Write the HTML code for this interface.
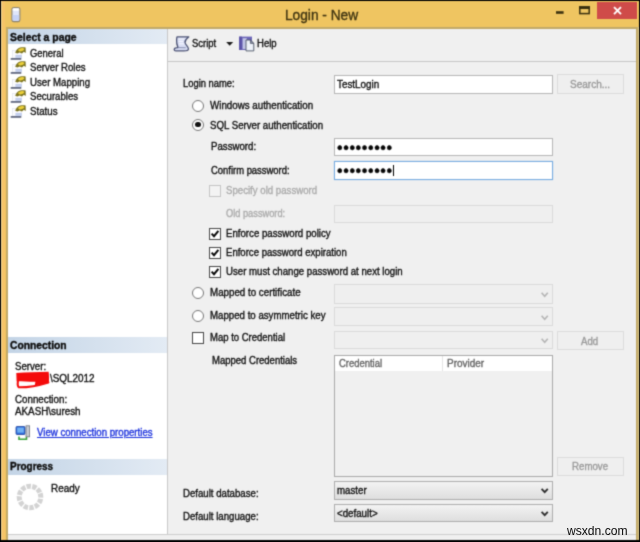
<!DOCTYPE html>
<html>
<head>
<meta charset="utf-8">
<title>Login - New</title>
<style>
html,body{margin:0;padding:0;}
body{width:640px;height:542px;overflow:hidden;background:#000;position:relative;font-family:"Liberation Sans",sans-serif;font-size:10px;color:#121212;}
.abs{position:absolute;}
#win{left:1px;top:1px;width:638px;height:539px;background:#efc561;}
#tan{left:6.3px;top:27.3px;width:631.5px;height:512.7px;background:#c1a968;}
#close{left:596.5px;top:1.5px;width:40.5px;height:17px;background:#cf4b49;}
#content{left:8px;top:28.7px;width:627.6px;height:511.3px;background:#f0f0f0;}
#left{left:8px;top:28.7px;width:159px;height:505px;background:#fff;}
.hdr{left:8px;width:159px;height:16px;background:linear-gradient(90deg,#c3d4e6,#e3ebf4);}
.t{position:absolute;white-space:nowrap;line-height:13px;transform-origin:0 0;-webkit-text-stroke:0.35px;}
.inp{position:absolute;background:#fff;border:1px solid #b6b6b6;box-sizing:border-box;}
.dis{position:absolute;background:#efefef;border:1px solid #dadada;box-sizing:border-box;}
.btn{position:absolute;background:#efefef;border:1px solid #dcdcdc;box-sizing:border-box;}
.cmb{position:absolute;background:linear-gradient(#f3f3f3,#dedede);border:1px solid #adadad;box-sizing:border-box;}
.radio{position:absolute;width:12px;height:12px;border:1.1px solid #777;border-radius:50%;background:#fff;box-sizing:border-box;}
.chk{position:absolute;width:12px;height:12px;border:1.1px solid #474747;background:#fff;box-sizing:border-box;}
.chk.d{border-color:#c4c4c4;background:#f3f3f3;}
svg{position:absolute;overflow:visible;}
</style>
</head>
<body>
<svg width="0" height="0" style="position:absolute"><defs><filter id="soft" x="0" y="0" width="100%" height="100%" color-interpolation-filters="sRGB"><feConvolveMatrix order="3" kernelMatrix="0.062 0.249 0.062 0.249 1 0.249 0.062 0.249 0.062" divisor="2.244" edgeMode="duplicate" preserveAlpha="true"/></filter></defs></svg>
<div id="root" class="abs" style="left:0;top:0;width:640px;height:542px;background:#000;filter:url(#soft)">
<div id="win" class="abs"></div>
<div class="abs" style="left:1px;top:1px;width:1px;height:539px;background:#f2d592"></div>
<div class="abs" style="left:2px;top:1px;width:2.5px;height:539px;background:#f6c468"></div>
<div id="tan" class="abs"></div>
<div class="abs" style="left:637.8px;top:27px;width:1.2px;height:513px;background:#ead695"></div>
<div id="close" class="abs"></div>
<svg style="left:540px;top:0" width="100" height="28" viewBox="0 0 100 28">
  <rect x="16" y="11.2" width="7.6" height="2.6" fill="#3a300f"/>
  <rect x="39.8" y="7" width="9.4" height="6.6" fill="none" stroke="#3a300f" stroke-width="1.5"/>
  <rect x="39" y="6.2" width="11" height="2.8" fill="#3a300f"/>
  <path d="M74 7.2 L81 14.2 M81 7.2 L74 14.2" stroke="#fff" stroke-width="1.9" fill="none"/>
</svg>
<!-- title icon -->
<svg style="left:10px;top:5.7px" width="12" height="17" viewBox="0 0 12 17">
  <rect x="1.9" y="1.6" width="8" height="14" rx="2" fill="#dfe6fb" stroke="#8b826c" stroke-width="1.1"/>
  <rect x="2.6" y="2.2" width="6.6" height="2.6" rx="1" fill="#fff"/>
  <rect x="2.6" y="9" width="6.6" height="5.6" fill="#c6d3f7"/>
</svg>

<div id="content" class="abs"></div>
<div id="left" class="abs"></div>
<div class="abs" style="left:167px;top:29px;width:1px;height:505px;background:#c8c8c8"></div>
<div class="abs" style="left:8px;top:533.6px;width:627.6px;height:1.2px;background:#cdcdcd"></div>

<div class="abs hdr" style="top:28.7px;height:15.8px"></div>
<div class="abs hdr" style="top:337px;height:15.7px"></div>
<div class="abs hdr" style="top:459px"></div>

<!-- page icons -->
<svg style="left:11px;top:46.5px" width="16" height="13" viewBox="0 0 16 13">
  <rect x="1.4" y="3.6" width="8.8" height="7.6" fill="#fbfbfd" stroke="#e3e6ee" stroke-width="0.7"/>
  <rect x="4.4" y="7.9" width="6.5" height="3" fill="#c3cfee"/>
  <rect x="-0.3" y="11.3" width="10.6" height="1.3" fill="#2c3555"/>
  <path d="M4.2 5.8 C5 3.4 6.6 1.4 9 0.6 C11 0 13.2 0.1 14.6 0.4 L14.8 6 L12.8 4.8 L11 6.6 L8.6 5.5 L6.4 6.6 Z" fill="#7d7521"/>
  <ellipse cx="10.2" cy="2.7" rx="3.1" ry="1.6" fill="#ebcf3a" transform="rotate(-12 10.2 2.7)"/>
</svg>
<svg style="left:11px;top:61px" width="16" height="13" viewBox="0 0 16 13">
  <rect x="1.4" y="3.6" width="8.8" height="7.6" fill="#fbfbfd" stroke="#e3e6ee" stroke-width="0.7"/>
  <rect x="4.4" y="7.9" width="6.5" height="3" fill="#c3cfee"/>
  <rect x="-0.3" y="11.3" width="10.6" height="1.3" fill="#2c3555"/>
  <path d="M4.2 5.8 C5 3.4 6.6 1.4 9 0.6 C11 0 13.2 0.1 14.6 0.4 L14.8 6 L12.8 4.8 L11 6.6 L8.6 5.5 L6.4 6.6 Z" fill="#7d7521"/>
  <ellipse cx="10.2" cy="2.7" rx="3.1" ry="1.6" fill="#ebcf3a" transform="rotate(-12 10.2 2.7)"/>
</svg>
<svg style="left:11px;top:75.5px" width="16" height="13" viewBox="0 0 16 13">
  <rect x="1.4" y="3.6" width="8.8" height="7.6" fill="#fbfbfd" stroke="#e3e6ee" stroke-width="0.7"/>
  <rect x="4.4" y="7.9" width="6.5" height="3" fill="#c3cfee"/>
  <rect x="-0.3" y="11.3" width="10.6" height="1.3" fill="#2c3555"/>
  <path d="M4.2 5.8 C5 3.4 6.6 1.4 9 0.6 C11 0 13.2 0.1 14.6 0.4 L14.8 6 L12.8 4.8 L11 6.6 L8.6 5.5 L6.4 6.6 Z" fill="#7d7521"/>
  <ellipse cx="10.2" cy="2.7" rx="3.1" ry="1.6" fill="#ebcf3a" transform="rotate(-12 10.2 2.7)"/>
</svg>
<svg style="left:11px;top:90px" width="16" height="13" viewBox="0 0 16 13">
  <rect x="1.4" y="3.6" width="8.8" height="7.6" fill="#fbfbfd" stroke="#e3e6ee" stroke-width="0.7"/>
  <rect x="4.4" y="7.9" width="6.5" height="3" fill="#c3cfee"/>
  <rect x="-0.3" y="11.3" width="10.6" height="1.3" fill="#2c3555"/>
  <path d="M4.2 5.8 C5 3.4 6.6 1.4 9 0.6 C11 0 13.2 0.1 14.6 0.4 L14.8 6 L12.8 4.8 L11 6.6 L8.6 5.5 L6.4 6.6 Z" fill="#7d7521"/>
  <ellipse cx="10.2" cy="2.7" rx="3.1" ry="1.6" fill="#ebcf3a" transform="rotate(-12 10.2 2.7)"/>
</svg>
<svg style="left:11px;top:104.5px" width="16" height="13" viewBox="0 0 16 13">
  <rect x="1.4" y="3.6" width="8.8" height="7.6" fill="#fbfbfd" stroke="#e3e6ee" stroke-width="0.7"/>
  <rect x="4.4" y="7.9" width="6.5" height="3" fill="#c3cfee"/>
  <rect x="-0.3" y="11.3" width="10.6" height="1.3" fill="#2c3555"/>
  <path d="M4.2 5.8 C5 3.4 6.6 1.4 9 0.6 C11 0 13.2 0.1 14.6 0.4 L14.8 6 L12.8 4.8 L11 6.6 L8.6 5.5 L6.4 6.6 Z" fill="#7d7521"/>
  <ellipse cx="10.2" cy="2.7" rx="3.1" ry="1.6" fill="#ebcf3a" transform="rotate(-12 10.2 2.7)"/>
</svg>

<!-- red scribble -->
<svg style="left:14px;top:371px" width="40" height="20" viewBox="0 0 40 20">
  <path d="M2.3 1.9 C12 1.3 24 1 34.6 0.8 C35.1 4 35.2 8 34.9 11.6 C30 13 25 13.8 20.8 14.2 L21.4 10.8 C14 10.6 8 10.5 2.6 10.2 Z" fill="#f40b0b"/>
  <path d="M3.9 10.4 C3.5 13.2 3.7 15.4 4.8 16.3 C12 16.4 24 14.6 34.4 11.4" stroke="#f40b0b" stroke-width="2.1" fill="none" stroke-linecap="round"/>
</svg>

<!-- connection icon -->
<svg style="left:15px;top:425px" width="16" height="16" viewBox="0 0 16 16">
  <rect x="1" y="1.5" width="9" height="8" rx="1" fill="#2f6fdc" stroke="#1c3f9a" stroke-width="0.8"/>
  <rect x="2.2" y="2.6" width="6.6" height="5" fill="#6fb0f4"/>
  <rect x="11" y="0.8" width="3.6" height="11" fill="#c9ccd2" stroke="#70747c" stroke-width="0.8"/>
  <path d="M4 11.5 L4 14.2 L11.5 14.2 L11.5 12" fill="none" stroke="#3aa23a" stroke-width="1.6"/>
</svg>

<!-- spinner -->
<svg style="left:15px;top:482px" width="30" height="30" viewBox="0 0 30 30">
  <circle cx="15" cy="15" r="10.8" fill="none" stroke="#d3d3d3" stroke-width="5" stroke-dasharray="4.3 1.355" transform="rotate(-20 15 15)"/>
</svg>

<!-- toolbar -->
<div class="abs" style="left:168px;top:61px;width:468px;height:1px;background:#c6c6c6"></div>
<svg style="left:174px;top:36px" width="17" height="16" viewBox="0 0 17 16">
  <path d="M3 0.9 L14.8 0.9 C13 2.6 10.6 4 11 6.5 C11.4 9 14.5 10.5 14.5 13 C14.4 14.6 12.4 14.9 10 14.9 L2 14.9 C0.6 14.9 0 14 0.3 13 C0.6 11.8 2.5 11.6 4 11.6 C3 9 2.4 6 2.6 4 C2.7 2.6 2.8 1.6 3 0.9 Z" fill="#d9def4" stroke="#4c5374" stroke-width="1.3" stroke-linejoin="round"/>
  <path d="M4.4 3 L10.4 3 M4.6 5.4 L9.4 5.4 M5 7.8 L10 7.8" stroke="#f6f8ff" stroke-width="1" fill="none"/>
  <path d="M4 11.6 L11.8 11.8" stroke="#7c84a8" stroke-width="0.9" fill="none"/>
</svg>
<svg style="left:225.5px;top:42.3px" width="8" height="5" viewBox="0 0 8 5"><path d="M0.2 0 L7.2 0 L3.7 3.8 Z" fill="#1a1a1a"/></svg>
<svg style="left:239px;top:36px" width="16" height="16" viewBox="0 0 16 16">
  <rect x="0.2" y="0.6" width="12.8" height="13.4" fill="#6c66b8"/>
  <rect x="0.2" y="0.6" width="2.6" height="13.4" fill="#5a52a6"/>
  <rect x="3.6" y="2.2" width="4.2" height="10.8" fill="#c2c5e7"/>
  <path d="M7 4 L11.4 4 L14.8 7.4 L14.8 14.9 L7 14.9 Z" fill="#eef2f9" stroke="#4a5263" stroke-width="0.9" stroke-linejoin="round"/>
  <path d="M11.4 4 L11.4 7.4 L14.8 7.4 Z" fill="#8b93a8" stroke="#4a5263" stroke-width="0.7"/>
</svg>

<!-- form -->
<div class="inp" style="left:333.5px;top:75px;width:219.5px;height:19px"></div>
<div class="btn" style="left:557px;top:74px;width:66.5px;height:19.5px"></div>

<div class="radio" style="left:192px;top:99.7px"></div>
<div class="radio" style="left:192px;top:118.5px"></div>
<div class="abs" style="left:195.3px;top:121.8px;width:5.4px;height:5.4px;border-radius:50%;background:#111"></div>

<div class="inp" style="left:333.5px;top:137.5px;width:219.5px;height:18.5px"></div>
<div class="inp" style="left:333.5px;top:160.5px;width:219.5px;height:19px;border-color:#78ace0;box-shadow:0 0 1px #a5c8ea"></div>
<div class="abs" style="left:393.3px;top:164.5px;width:1.2px;height:11.5px;background:#000"></div>

<div class="chk d" style="left:209px;top:185px"></div>
<div class="dis" style="left:333.5px;top:204.5px;width:219.5px;height:18.5px"></div>

<div class="chk" style="left:209px;top:227.5px"></div>
<div class="chk" style="left:209px;top:246.5px"></div>
<div class="chk" style="left:209px;top:266px"></div>
<svg style="left:209px;top:227.5px" width="12" height="12" viewBox="0 0 12 12"><path d="M2.6 5.6 L5 8.2 L9.4 2.8" fill="none" stroke="#0a0a0a" stroke-width="2"/></svg>
<svg style="left:209px;top:246.5px" width="12" height="12" viewBox="0 0 12 12"><path d="M2.6 5.6 L5 8.2 L9.4 2.8" fill="none" stroke="#0a0a0a" stroke-width="2"/></svg>
<svg style="left:209px;top:266px" width="12" height="12" viewBox="0 0 12 12"><path d="M2.6 5.6 L5 8.2 L9.4 2.8" fill="none" stroke="#0a0a0a" stroke-width="2"/></svg>

<div class="radio" style="left:192px;top:286.5px"></div>
<div class="dis" style="left:333.5px;top:283.5px;width:219.5px;height:20px"></div>
<div class="radio" style="left:192px;top:309.5px"></div>
<div class="dis" style="left:333.5px;top:307px;width:219.5px;height:19px"></div>

<div class="chk" style="left:192.3px;top:331.6px"></div>
<div class="dis" style="left:333.5px;top:330.5px;width:219.5px;height:18.5px"></div>
<div class="btn" style="left:557px;top:330.5px;width:66.5px;height:19.5px"></div>
<svg style="left:541px;top:291.5px" width="8" height="6" viewBox="0 0 8 6"><path d="M0.6 0.8 L3.7 4.2 L6.8 0.8" fill="none" stroke="#b4b4b4" stroke-width="1.6"/></svg>
<svg style="left:541px;top:314.5px" width="8" height="6" viewBox="0 0 8 6"><path d="M0.6 0.8 L3.7 4.2 L6.8 0.8" fill="none" stroke="#b4b4b4" stroke-width="1.6"/></svg>
<svg style="left:541px;top:338px" width="8" height="6" viewBox="0 0 8 6"><path d="M0.6 0.8 L3.7 4.2 L6.8 0.8" fill="none" stroke="#b4b4b4" stroke-width="1.6"/></svg>

<div class="inp" style="left:333.5px;top:354.5px;width:219.5px;height:122px;background:#f0f0f0;border-color:#a9a9a9"></div>
<div class="abs" style="left:334.5px;top:355.5px;width:217.5px;height:15.5px;background:#fff"></div>
<div class="abs" style="left:442px;top:355.5px;width:1px;height:15.5px;background:#e4e4e4"></div>
<div class="btn" style="left:557px;top:457px;width:66.5px;height:19px"></div>

<div class="cmb" style="left:333.5px;top:480.5px;width:219.5px;height:19px"></div>
<div class="cmb" style="left:333.5px;top:503.5px;width:219.5px;height:18.5px"></div>
<svg style="left:541px;top:487.7px" width="8" height="6" viewBox="0 0 8 6"><path d="M0.6 0.8 L3.7 4.2 L6.8 0.8" fill="none" stroke="#2c2c2c" stroke-width="1.8"/></svg>
<svg style="left:541px;top:510.5px" width="8" height="6" viewBox="0 0 8 6"><path d="M0.6 0.8 L3.7 4.2 L6.8 0.8" fill="none" stroke="#2c2c2c" stroke-width="1.8"/></svg>

<div class="abs" style="left:0;top:0;width:640px;height:542px;will-change:transform;">
<div class="t" style="left:337px;top:139.2px;font-size:16px;letter-spacing:0.6px;line-height:18px;color:#050505;transform:scaleX(0.998)">•••••••••</div>
<div class="t" style="left:337px;top:162.2px;font-size:16px;letter-spacing:0.6px;line-height:18px;color:#050505;transform:scaleX(0.998)">•••••••••</div>
<div class="t" style="left:9.7px;top:31.0px;transform:scaleX(1.042);font-weight:bold;color:#0c0c0c;">Select a page</div>
<div class="t" style="left:29.7px;top:47.0px;transform:scaleX(0.944);">General</div>
<div class="t" style="left:29.7px;top:61.0px;transform:scaleX(0.962);">Server Roles</div>
<div class="t" style="left:29.7px;top:76.0px;transform:scaleX(0.965);">User Mapping</div>
<div class="t" style="left:29.7px;top:90.0px;transform:scaleX(0.961);">Securables</div>
<div class="t" style="left:29.7px;top:105.0px;transform:scaleX(0.973);">Status</div>
<div class="t" style="left:9.7px;top:339.0px;transform:scaleX(1.029);font-weight:bold;color:#0c0c0c;">Connection</div>
<div class="t" style="left:15.2px;top:360.0px;transform:scaleX(0.965);">Server:</div>
<div class="t" style="left:49.7px;top:372.0px;transform:scaleX(0.990);">\SQL2012</div>
<div class="t" style="left:15.2px;top:393.0px;transform:scaleX(0.976);">Connection:</div>
<div class="t" style="left:15.2px;top:405.0px;transform:scaleX(0.983);">AKASH\suresh</div>
<div class="t" style="left:36.7px;top:426.0px;transform:scaleX(0.964);color:#1d33dd;text-decoration:underline;">View connection properties</div>
<div class="t" style="left:10.2px;top:460.0px;transform:scaleX(0.994);font-weight:bold;color:#0c0c0c;">Progress</div>
<div class="t" style="left:50.7px;top:482.0px;transform:scaleX(0.989);">Ready</div>
<div class="t" style="left:192.2px;top:37.0px;transform:scaleX(0.943);">Script</div>
<div class="t" style="left:256.7px;top:37.0px;transform:scaleX(0.952);">Help</div>
<div class="t" style="left:182.7px;top:77.0px;transform:scaleX(0.937);">Login name:</div>
<div class="t" style="left:336.7px;top:78.0px;transform:scaleX(0.988);">TestLogin</div>
<div class="t" style="left:570.2px;top:78.0px;transform:scaleX(1.002);color:#9a9a9a;">Search...</div>
<div class="t" style="left:209.7px;top:99.0px;transform:scaleX(0.976);">Windows authentication</div>
<div class="t" style="left:209.7px;top:119.0px;transform:scaleX(0.967);">SQL Server authentication</div>
<div class="t" style="left:211.2px;top:140.0px;transform:scaleX(0.966);">Password:</div>
<div class="t" style="left:211.2px;top:164.0px;transform:scaleX(0.943);">Confirm password:</div>
<div class="t" style="left:226.2px;top:184.0px;transform:scaleX(0.964);color:#acacac;">Specify old password</div>
<div class="t" style="left:226.2px;top:207.0px;transform:scaleX(0.925);color:#acacac;">Old password:</div>
<div class="t" style="left:226.2px;top:227.0px;transform:scaleX(0.965);">Enforce password policy</div>
<div class="t" style="left:226.2px;top:246.0px;transform:scaleX(0.957);">Enforce password expiration</div>
<div class="t" style="left:226.2px;top:265.0px;transform:scaleX(0.963);">User must change password at next login</div>
<div class="t" style="left:209.7px;top:286.0px;transform:scaleX(0.976);">Mapped to certificate</div>
<div class="t" style="left:209.7px;top:309.0px;transform:scaleX(0.967);">Mapped to asymmetric key</div>
<div class="t" style="left:209.7px;top:331.0px;transform:scaleX(0.951);">Map to Credential</div>
<div class="t" style="left:211.7px;top:354.0px;transform:scaleX(0.951);">Mapped Credentials</div>
<div class="t" style="left:339.2px;top:357.0px;transform:scaleX(0.945);color:#666;">Credential</div>
<div class="t" style="left:447.2px;top:357.0px;transform:scaleX(0.996);color:#666;">Provider</div>
<div class="t" style="left:580.7px;top:335.0px;transform:scaleX(0.961);color:#9a9a9a;">Add</div>
<div class="t" style="left:571.7px;top:460.0px;transform:scaleX(0.969);color:#9a9a9a;">Remove</div>
<div class="t" style="left:182.7px;top:487.0px;transform:scaleX(0.964);">Default database:</div>
<div class="t" style="left:182.7px;top:510.0px;transform:scaleX(0.964);">Default language:</div>
<div class="t" style="left:336.7px;top:484.0px;transform:scaleX(0.969);">master</div>
<div class="t" style="left:336.7px;top:507.0px;transform:scaleX(0.973);">&lt;default&gt;</div>
<div class="t" style="left:285.2px;top:6.8px;transform:scaleX(0.979);font-size:14px;line-height:17px;color:#3f3411;">Login - New</div>
</div>
</div>
<div class="t" style="left:567.2px;top:523.3px;transform:scaleX(0.897);font-size:13.5px;line-height:16px;color:#0a0a0a;-webkit-text-stroke:0;">wsxdn.com</div>
</body>
</html>
